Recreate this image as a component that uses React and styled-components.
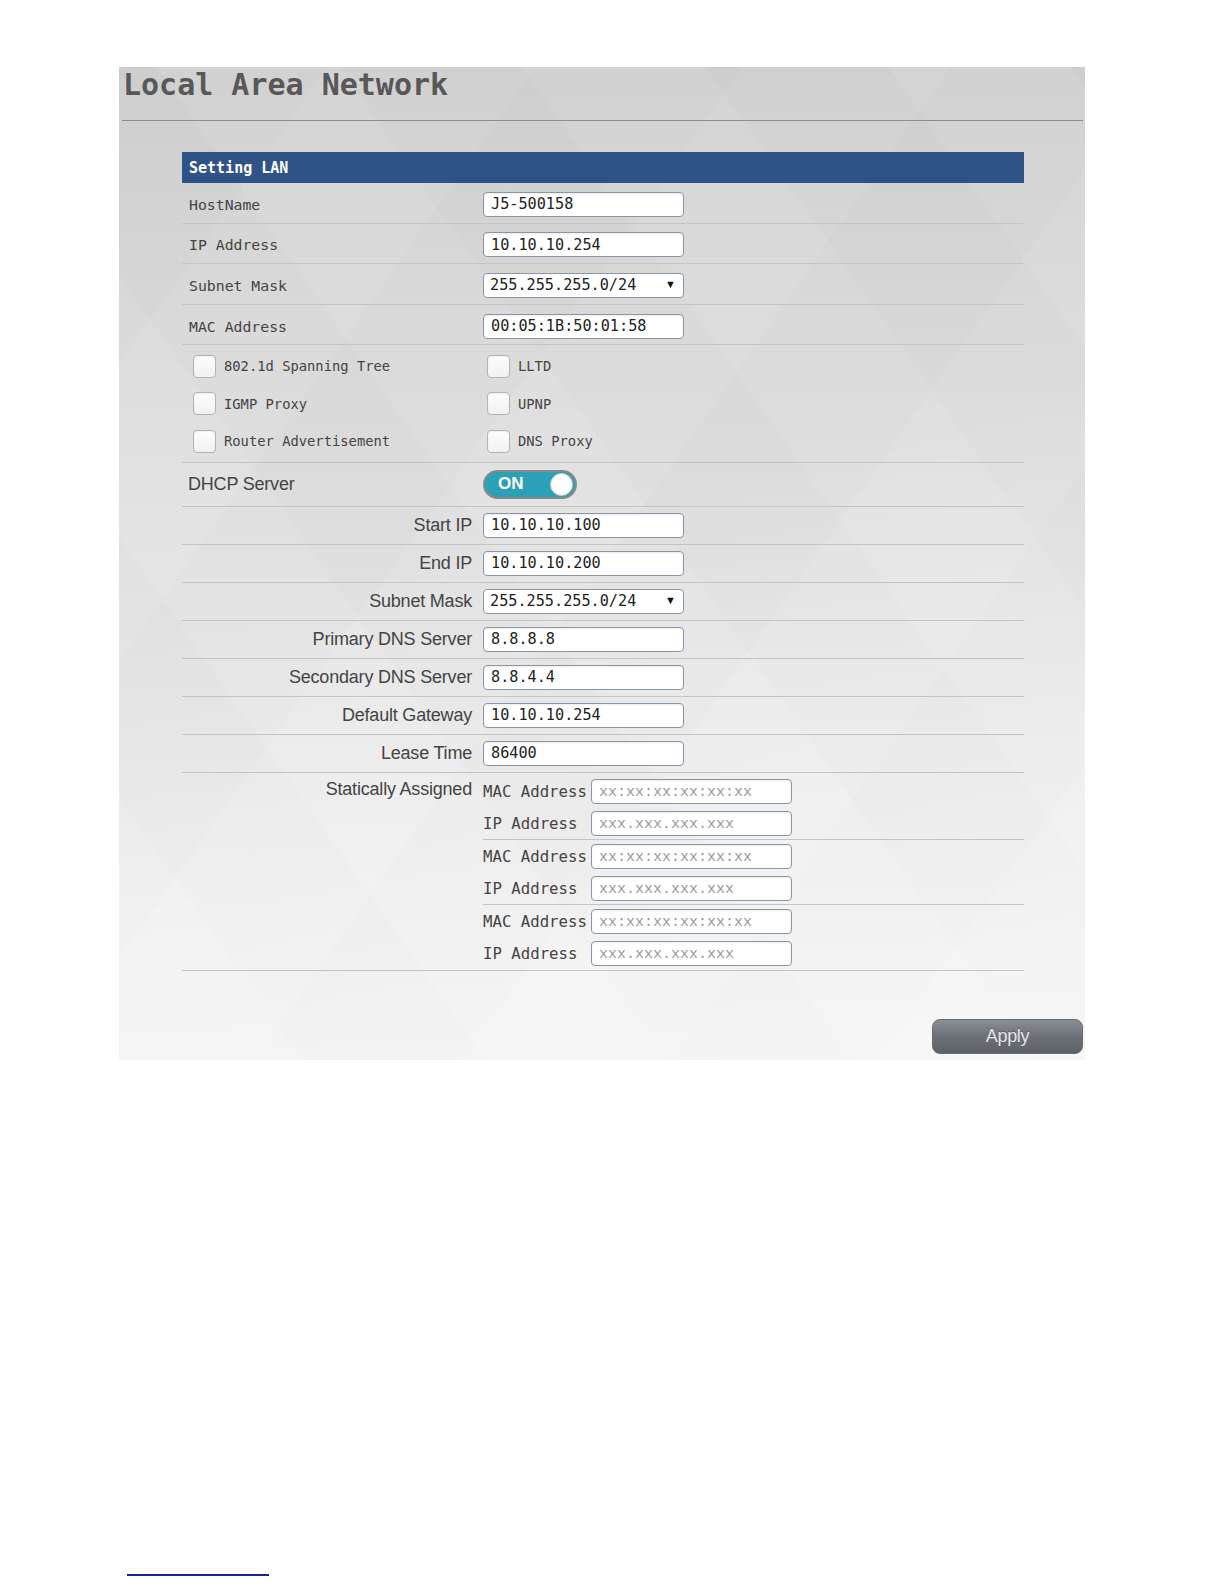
import React from "react";
import styled, { createGlobalStyle } from "styled-components";

const MONO = `"DejaVu Sans Mono", "Liberation Mono", monospace`;
const SANS = `"Liberation Sans", Arial, sans-serif`;

const GlobalStyle = createGlobalStyle`
  html, body {
    margin: 0;
    padding: 0;
    background: #fff;
  }
  * {
    box-sizing: border-box;
  }
`;

//page + panel
const Page = styled.div`
  min-height: 1584px;
  display: flex;
  flex-direction: column;
  padding: 67px 0 8px 119px;
`;

const Panel = styled.div`
  width: 966px;
  padding-bottom: 6px;
  background:
    linear-gradient(165deg, rgba(255, 255, 255, 0) 45%, rgba(255, 255, 255, 0.4) 100%),
    repeating-linear-gradient(55deg, rgba(255, 255, 255, 0.035) 0 150px, rgba(0, 0, 0, 0.008) 150px 300px),
    repeating-linear-gradient(-55deg, rgba(255, 255, 255, 0.03) 0 170px, rgba(0, 0, 0, 0.008) 170px 340px),
    linear-gradient(180deg, #d1d1d1 0%, #dadada 25%, #e4e4e4 55%, #eeeeee 85%, #f2f2f2 100%);
`;

const Title = styled.h1`
  margin: 0 2px 0 3px;
  padding: 3px 0 20px 1px;
  font-family: ${MONO};
  font-weight: bold;
  font-size: 30px;
  line-height: 30px;
  color: #585858;
  border-bottom: 1px solid #8c8c8c;
`;

const Section = styled.div`
  margin: 31px 0 0 63px;
  width: 842px;
`;

const SectionBar = styled.div`
  height: 31px;
  display: flex;
  align-items: center;
  padding-left: 7px;
  background: #2f5387;
  color: #fff;
  font-family: ${MONO};
  font-weight: bold;
  font-size: 15px;
`;

//rows ($height is the full row height, border included)
const FieldRow = styled.div`
  display: grid;
  grid-template-columns: 290px 1fr;
  column-gap: 11px;
  align-items: center;
  min-height: ${(p) => p.$height}px;
  padding-top: ${(p) => p.$padTop || 0}px;
  border-bottom: 1px solid #c4c4c4;
`;

const MonoLabel = styled.div`
  padding-left: 7px;
  font-family: ${MONO};
  font-size: 14.8px;
  color: #444;
`;

const SansLabel = styled.div`
  padding-left: ${(p) => (p.$right ? 0 : 6)}px;
  text-align: ${(p) => (p.$right ? "right" : "left")};
  font-family: ${SANS};
  font-size: 18px;
  letter-spacing: -0.2px;
  color: #444;
`;

const TextInput = styled.input`
  width: 201px;
  height: 25px;
  padding: 0 7px;
  margin: 0;
  border: 1px solid #8797a7;
  border-radius: 4px;
  background: #fff;
  box-shadow: inset 0 1px 2px rgba(0, 0, 0, 0.08);
  font-family: ${MONO};
  font-size: 15.2px;
  color: #222;
  outline: none;

  &::placeholder {
    font-family: "Liberation Mono", monospace;
    font-size: 15px;
    color: #9a9a9a;
  }
`;

const SelectWrap = styled.div`
  position: relative;
  width: 201px;
  height: 25px;
`;

const Select = styled.select`
  appearance: none;
  width: 100%;
  height: 100%;
  padding: 0 6px;
  margin: 0;
  border: 1px solid #8797a7;
  border-radius: 4px;
  background: #fff;
  font-family: ${MONO};
  font-size: 15.2px;
  color: #222;
  outline: none;
`;

const Arrow = styled.span`
  position: absolute;
  right: 8px;
  top: 5px;
  font-family: ${SANS};
  font-size: 11px;
  color: #111;
  pointer-events: none;
`;

//checkboxes
const CheckGrid = styled.div`
  display: grid;
  grid-template-columns: 294px 1fr;
  grid-auto-rows: 37.5px;
  padding: 2px 0 2px 11px;
  border-bottom: 1px solid #c4c4c4;
`;

const CheckItem = styled.label`
  display: flex;
  align-items: center;
  gap: 8px;
`;

const CheckBox = styled.span`
  width: 23px;
  height: 23px;
  border: 1px solid #b4b4b4;
  border-radius: 4px;
  background: linear-gradient(180deg, #fdfdfd, #f1f1f1);
  box-shadow: inset 0 1px 2px rgba(0, 0, 0, 0.06);
`;

const CheckText = styled.span`
  font-family: ${MONO};
  font-size: 13.8px;
  color: #444;
`;

//dhcp toggle
const Toggle = styled.div`
  width: 94px;
  height: 29px;
  display: flex;
  align-items: center;
  justify-content: space-between;
  padding: 0 2px 0 13px;
  border: 2px solid #8a8a8a;
  border-radius: 15px;
  background: #2aa1b7;
  color: #fff;
  font-family: ${SANS};
  font-weight: bold;
  font-size: 17px;
`;

const Knob = styled.span`
  width: 23px;
  height: 23px;
  border-radius: 50%;
  background: #fff;
  border: 1px solid #c8c8c8;
`;

//statically assigned block
const StaticBlock = styled.div`
  display: grid;
  grid-template-columns: 290px 1fr;
  column-gap: 11px;
  padding: 2px 0 1px;
  border-bottom: 1px solid #c4c4c4;
`;

const StaticTitle = styled(SansLabel)`
  padding-top: 4px;
  line-height: 21.6px;
`;

const StaticGroup = styled.div`
  display: grid;
  grid-template-columns: 108px 201px;
  row-gap: 7px;
  align-items: center;
  padding: 4px 0 3px;
  border-top: ${(p) => (p.$first ? "none" : "1px solid #c4c4c4")};
`;

const StaticKey = styled.span`
  font-family: ${MONO};
  font-size: 15.7px;
  color: #444;
  white-space: nowrap;
`;

//footer
const ActionBar = styled.div`
  display: flex;
  justify-content: flex-end;
  padding: 48px 2px 0 0;
`;

const ApplyButton = styled.button`
  width: 151px;
  height: 35px;
  border: 1px solid #666b72;
  border-radius: 8px;
  background: linear-gradient(180deg, #8a8f96 0%, #6c7178 50%, #5c6168 100%);
  color: #e6e6e6;
  font-family: ${SANS};
  font-size: 18px;
  letter-spacing: -0.3px;
  text-shadow: 0 -1px 0 rgba(0, 0, 0, 0.25);
  cursor: pointer;
`;

const FootLine = styled.div`
  margin: auto 0 0 8px;
  width: 142px;
  border-top: 2px solid #1e1e8c;
`;

const topFields = [
  { label: "HostName", value: "J5-500158" },
  { label: "IP Address", value: "10.10.10.254" },
  { label: "Subnet Mask", value: "255.255.255.0/24", select: true },
  { label: "MAC Address", value: "00:05:1B:50:01:58" }
];

const checks = [
  "802.1d Spanning Tree",
  "LLTD",
  "IGMP Proxy",
  "UPNP",
  "Router Advertisement",
  "DNS Proxy"
];

const dhcpFields = [
  { label: "Start IP", value: "10.10.10.100" },
  { label: "End IP", value: "10.10.10.200" },
  { label: "Subnet Mask", value: "255.255.255.0/24", select: true },
  { label: "Primary DNS Server", value: "8.8.8.8" },
  { label: "Secondary DNS Server", value: "8.8.4.4" },
  { label: "Default Gateway", value: "10.10.10.254" },
  { label: "Lease Time", value: "86400" }
];

const Field = ({ value, select }) =>
  select ? (
    <SelectWrap>
      <Select defaultValue={value}>
        <option>{value}</option>
      </Select>
      <Arrow>▼</Arrow>
    </SelectWrap>
  ) : (
    <TextInput type="text" defaultValue={value} />
  );

export default function App() {
  return (
    <>
      <GlobalStyle />
      <Page>
        <Panel>
          <Title>Local Area Network</Title>
          <Section>
            <SectionBar>Setting LAN</SectionBar>

            {topFields.map((f) => (
              <FieldRow key={f.label} $height={40.6} $padTop={3}>
                <MonoLabel>{f.label}</MonoLabel>
                <div>
                  <Field value={f.value} select={f.select} />
                </div>
              </FieldRow>
            ))}

            <CheckGrid>
              {checks.map((c) => (
                <CheckItem key={c}>
                  <CheckBox />
                  <CheckText>{c}</CheckText>
                </CheckItem>
              ))}
            </CheckGrid>

            <FieldRow $height={44}>
              <SansLabel>DHCP Server</SansLabel>
              <div>
                <Toggle>
                  ON
                  <Knob />
                </Toggle>
              </div>
            </FieldRow>

            {dhcpFields.map((f) => (
              <FieldRow key={f.label} $height={38}>
                <SansLabel $right>{f.label}</SansLabel>
                <div>
                  <Field value={f.value} select={f.select} />
                </div>
              </FieldRow>
            ))}

            <StaticBlock>
              <StaticTitle $right>Statically Assigned</StaticTitle>
              <div>
                {[0, 1, 2].map((i) => (
                  <StaticGroup key={i} $first={i === 0}>
                    <StaticKey>MAC Address</StaticKey>
                    <TextInput type="text" placeholder="xx:xx:xx:xx:xx:xx" />
                    <StaticKey>IP Address</StaticKey>
                    <TextInput type="text" placeholder="xxx.xxx.xxx.xxx" />
                  </StaticGroup>
                ))}
              </div>
            </StaticBlock>
          </Section>

          <ActionBar>
            <ApplyButton type="button">Apply</ApplyButton>
          </ActionBar>
        </Panel>
        <FootLine />
      </Page>
    </>
  );
}
